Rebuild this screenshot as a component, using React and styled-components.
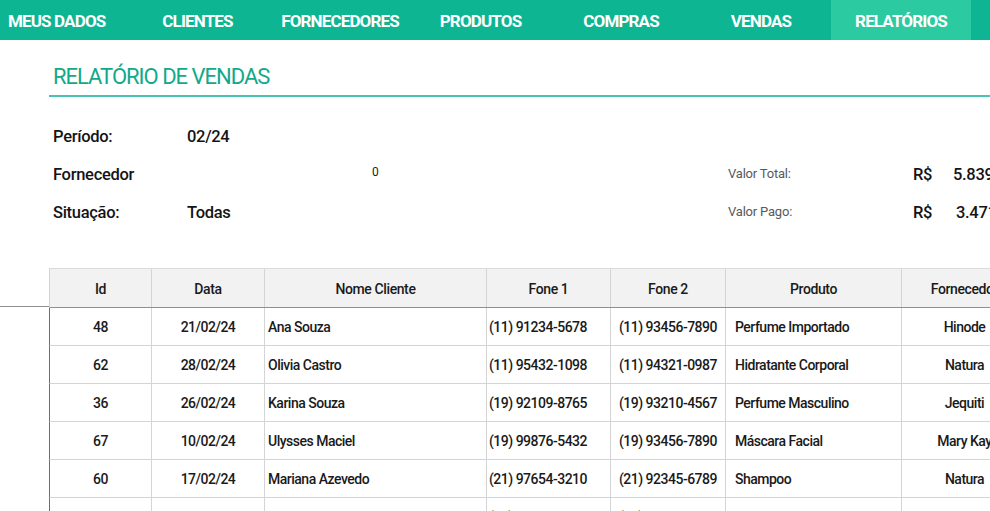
import React from 'react'
import styled, { createGlobalStyle } from 'styled-components'

const GlobalStyle = createGlobalStyle`
  html, body {
    margin: 0;
    padding: 0;
    background: #ffffff;
    overflow: hidden;
  }
  body {
    font-family: Roboto, "Noto Sans", "Liberation Sans", sans-serif;
    color: #1a1a1a;
  }
`

const menu = ['MEUS DADOS', 'CLIENTES', 'FORNECEDORES', 'PRODUTOS', 'COMPRAS', 'VENDAS', 'RELATÓRIOS']

const columns = [
  { title: 'Id', width: 102, align: 'center' },
  { title: 'Data', width: 113, align: 'center' },
  { title: 'Nome Cliente', width: 222, align: 'left', pad: 3 },
  { title: 'Fone 1', width: 124, align: 'left', pad: 2 },
  { title: 'Fone 2', width: 115, align: 'center' },
  { title: 'Produto', width: 176, align: 'left', pad: 9 },
  { title: 'Fornecedor', width: 126, align: 'center' },
  { title: 'Quantidade', width: 110, align: 'center' },
  { title: 'Valor', width: 110, align: 'center' },
]

const vendas = [
  ['48', '21/02/24', 'Ana Souza', '(11) 91234-5678', '(11) 93456-7890', 'Perfume Importado', 'Hinode', '1', '289,90'],
  ['62', '28/02/24', 'Olivia Castro', '(11) 95432-1098', '(11) 94321-0987', 'Hidratante Corporal', 'Natura', '2', '119,80'],
  ['36', '26/02/24', 'Karina Souza', '(19) 92109-8765', '(19) 93210-4567', 'Perfume Masculino', 'Jequiti', '1', '159,90'],
  ['67', '10/02/24', 'Ulysses Maciel', '(19) 99876-5432', '(19) 93456-7890', 'Máscara Facial', 'Mary Kay', '3', '134,70'],
  ['60', '17/02/24', 'Mariana Azevedo', '(21) 97654-3210', '(21) 92345-6789', 'Shampoo', 'Natura', '2', '79,80'],
  ['55', '05/02/24', 'Beatriz Lima', '(31) 98765-4321', '(31) 91234-5678', 'Condicionador', 'Natura', '1', '39,90'],
]

const gridCols = columns.map(c => `${c.width}px`).join(' ')

export default function App() {
  return (
    <Page>
      <GlobalStyle />
      <NavBar>
        {menu.map((item, i) => (
          <NavItem key={item} $first={i === 0} $active={item === 'RELATÓRIOS'}>
            {item}
          </NavItem>
        ))}
      </NavBar>

      <Content>
        <Title>RELATÓRIO DE VENDAS</Title>

        <Info>
          <InfoRow>
            <Label>Período:</Label>
            <Value>02/24</Value>
          </InfoRow>
          <InfoRow>
            <Label>Fornecedor</Label>
            <span />
            <Small>0</Small>
            <SubLabel>Valor Total:</SubLabel>
            <Value>R$</Value>
            <Value>5.839,50</Value>
          </InfoRow>
          <InfoRow>
            <Label>Situação:</Label>
            <Value>Todas</Value>
            <span />
            <SubLabel>Valor Pago:</SubLabel>
            <Value>R$</Value>
            <Value $indent>3.471,20</Value>
          </InfoRow>
        </Info>
      </Content>

      <TableArea>
        <Gutter>
          <GutterHead />
        </Gutter>
        <Table>
          <HeadRow>
            {columns.map(c => (
              <HeadCell key={c.title}>{c.title}</HeadCell>
            ))}
          </HeadRow>
          {vendas.map(row => (
            <BodyRow key={row[0]}>
              {row.map((value, i) => (
                <Cell key={i} $align={columns[i].align} $pad={columns[i].pad}>
                  {value}
                </Cell>
              ))}
            </BodyRow>
          ))}
        </Table>
      </TableArea>
    </Page>
  )
}

const Page = styled.div`
  width: 990px;
  height: 511px;
  overflow: hidden;
`

const NavBar = styled.nav`
  display: grid;
  grid-template-columns: 125px 145px 140px 141px 140px 140px 140px 1fr;
  height: 40px;
  background: #0db592;
`

const NavItem = styled.div`
  display: flex;
  align-items: center;
  justify-content: ${p => (p.$first ? 'flex-start' : 'center')};
  padding-left: ${p => (p.$first ? '8px' : '0')};
  padding-top: 1px;
  background: ${p => (p.$active ? '#2ccaa0' : 'transparent')};
  color: #ffffff;
  font-size: 17px;
  font-weight: 700;
  letter-spacing: -0.85px;
  white-space: nowrap;
`

const Content = styled.div`
  padding-left: 49px;
`

const Title = styled.h1`
  margin: 23px 0 0;
  padding: 0 0 4px 4px;
  border-bottom: 2px solid #49c2b3;
  color: #12a98a;
  font-size: 22px;
  font-weight: 400;
  letter-spacing: -1px;
  line-height: 28px;
`

const Info = styled.div`
  margin-top: 19px;
  padding-left: 4px;
`

const InfoRow = styled.div`
  display: grid;
  grid-template-columns: 134px 185px 356px 185px 40px 1fr;
  align-items: center;
  height: 38px;
`

const Label = styled.span`
  font-size: 16.5px;
  font-weight: 500;
  letter-spacing: -0.3px;
  color: #141414;
  padding-top: 2px;
`

const Value = styled(Label)`
  padding-left: ${p => (p.$indent ? '3px' : '0')};
  white-space: nowrap;
`

const Small = styled.span`
  font-size: 12px;
  color: #222;
  margin-top: -2px;
`

const SubLabel = styled.span`
  font-size: 13px;
  color: #595959;
  letter-spacing: -0.2px;
`

const TableArea = styled.div`
  display: flex;
  margin-top: 38px;
`

const Gutter = styled.div`
  width: 49px;
  flex-shrink: 0;
`

const GutterHead = styled.div`
  height: 38px;
  border-bottom: 1px solid #8f8f8f;
`

const Table = styled.div`
  display: flex;
  flex-direction: column;
  border-top: 1px solid #dadada;
`

const HeadRow = styled.div`
  display: grid;
  grid-template-columns: ${gridCols};
  height: 38px;
  background: #f2f2f2;
  border-bottom: 1px solid #8f8f8f;
  border-left: 1px solid #d4d4d4;
`

const HeadCell = styled.div`
  display: flex;
  align-items: center;
  justify-content: center;
  padding-top: 2px;
  border-right: 1px solid #d4d4d4;
  font-size: 14px;
  font-weight: 500;
  letter-spacing: -0.4px;
  color: #1a1a1a;
  white-space: nowrap;
`

const BodyRow = styled.div`
  display: grid;
  grid-template-columns: ${gridCols};
  height: 37px;
  border-bottom: 1px solid #d4d4d4;
  border-left: 1px solid #4472c4;
`

const Cell = styled.div`
  display: flex;
  align-items: center;
  justify-content: ${p => (p.$align === 'left' ? 'flex-start' : 'center')};
  padding-left: ${p => (p.$pad ? `${p.$pad}px` : '0')};
  padding-top: 1px;
  border-right: 1px solid #d4d4d4;
  font-size: 14px;
  font-weight: 500;
  letter-spacing: -0.5px;
  color: #1a1a1a;
  white-space: nowrap;
`
